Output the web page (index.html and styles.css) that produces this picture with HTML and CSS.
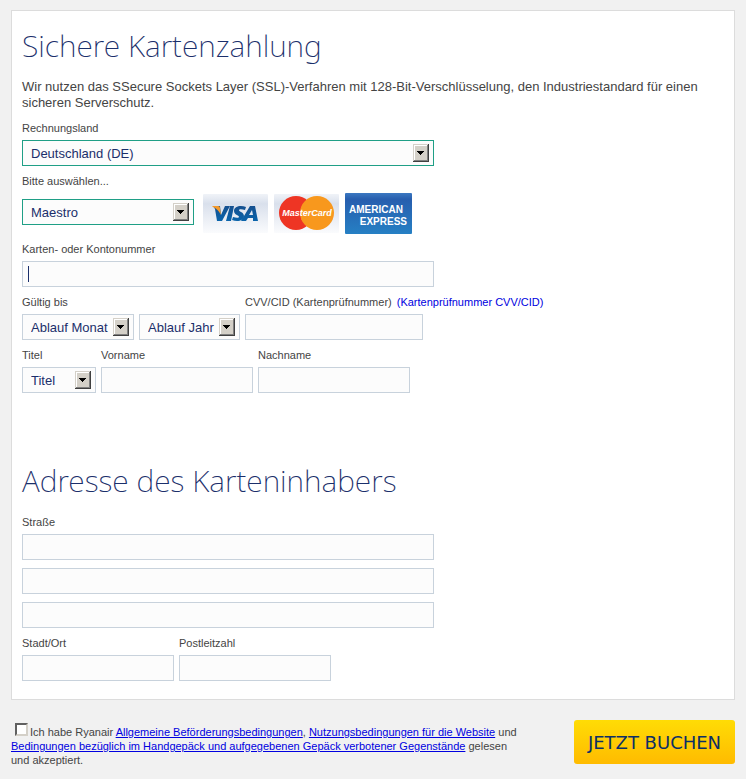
FILE: index.html
```html
<!DOCTYPE html>
<html lang="de">
<head>
    <meta charset="UTF-8">
    <meta name="viewport" content="width=device-width, initial-scale=1.0">
    <title>Sichere Kartenzahlung</title>
    <link rel="stylesheet" href="styles.css">
</head>

<body>
    <form id="paymentForm">
        <main class="card">
            <section class="payment">
                <h2>Sichere Kartenzahlung</h2>
                <p class="intro">Wir nutzen das SSecure Sockets Layer (SSL)-Verfahren mit 128-Bit-Verschlüsselung, den Industriestandard für einen sicheren Serverschutz.</p>

                <div class="field">
                    <label for="country">Rechnungsland</label>
                    <select id="country" class="wide selected">
                        <option>Deutschland (DE)</option>
                    </select>
                </div>

                <div class="field">
                    <label for="cardType">Bitte auswählen...</label>
                    <div class="card-types">
                        <select id="cardType" class="card-type selected">
                            <option>Maestro</option>
                        </select>
                        <div class="logos">
                            <!-- Visa -->
                            <svg width="65" height="41" viewBox="0 0 65 41" role="img" aria-label="Visa">
                                <defs>
                                    <linearGradient id="paper" x1="0" y1="0" x2="0" y2="1">
                                        <stop offset="0" stop-color="#f0f3f8"/>
                                        <stop offset="0.25" stop-color="#d9e0ec"/>
                                        <stop offset="0.6" stop-color="#e9edf4"/>
                                        <stop offset="1" stop-color="#fafbfd"/>
                                    </linearGradient>
                                    <linearGradient id="visaBlue" x1="0" y1="0" x2="0" y2="1">
                                        <stop offset="0" stop-color="#15508f"/>
                                        <stop offset="1" stop-color="#0a64ab"/>
                                    </linearGradient>
                                </defs>
                                <rect y="1" width="65" height="39" rx="1" fill="url(#paper)"/>
                                <g fill="url(#visaBlue)">
                                    <path d="M10 13h7l1 9 4-9h5l-8 15h-5L12 16z"/>
                                    <path d="M27 13h4l-3 15h-5z"/>
                                    <path d="M43 14l-1 3c-3-1-6-1-6 0 0 2 5 2 5 6 0 5-7 6-12 4l1-3c3 1 6 1 6 0 0-2-5-2-5-6 0-5 7-6 12-4z"/>
                                    <path fill-rule="evenodd" d="M47 13h5l3 15h-5v-3h-5l-2 3h-5zm2 4-3 5h4z"/>
                                </g>
                                <path d="M9 13h6q2 0 2 2l1 7q-3-6-8-8z" fill="#f49a2c"/>
                            </svg>
                            <!-- MasterCard -->
                            <svg width="65" height="41" viewBox="0 0 65 41" role="img" aria-label="MasterCard">
                                <rect y="1" width="65" height="39" rx="1" fill="url(#paper)"/>
                                <circle cx="22" cy="20" r="17" fill="#ee3524"/>
                                <circle cx="43" cy="20" r="17" fill="#f8981d"/>
                                <path d="M30 13h5M28 16h8M27 26h9M30 30h5" stroke="#f8981d" stroke-width="1"/>
                                <text x="33" y="23" text-anchor="middle" class="mc-text">MasterCard</text>
                            </svg>
                            <!-- American Express -->
                            <svg width="67" height="41" viewBox="0 0 67 41" role="img" aria-label="American Express">
                                <defs>
                                    <linearGradient id="amexBlue" x1="0" y1="0" x2="0" y2="1">
                                        <stop offset="0" stop-color="#3b78c1"/>
                                        <stop offset="0.15" stop-color="#275eae"/>
                                        <stop offset="1" stop-color="#2680c4"/>
                                    </linearGradient>
                                </defs>
                                <rect width="67" height="41" rx="1" fill="url(#amexBlue)"/>
                                <text x="4" y="20" class="amex-text">AMERICAN</text>
                                <text x="62" y="32" text-anchor="end" class="amex-text">EXPRESS</text>
                            </svg>
                        </div>
                    </div>
                </div>

                <div class="field">
                    <label for="cardNumber">Karten- oder Kontonummer</label>
                    <input type="text" id="cardNumber" class="wide" autofocus>
                </div>

                <div class="row">
                    <div class="field">
                        <label for="expMonth">Gültig bis</label>
                        <div class="expiry">
                            <select id="expMonth" class="month">
                                <option>Ablauf Monat</option>
                            </select>
                            <select id="expYear" class="year" aria-label="Ablauf Jahr">
                                <option>Ablauf Jahr</option>
                            </select>
                        </div>
                    </div>
                    <div class="field">
                        <div class="label-line">
                            <label for="cvv">CVV/CID (Kartenprüfnummer)</label>
                            <a href="#cvv">(Kartenprüfnummer CVV/CID)</a>
                        </div>
                        <input type="text" id="cvv" class="cvv">
                    </div>
                </div>

                <div class="row">
                    <div class="field">
                        <label for="title">Titel</label>
                        <select id="title" class="title">
                            <option>Titel</option>
                        </select>
                    </div>
                    <div class="field">
                        <label for="firstName">Vorname</label>
                        <input type="text" id="firstName" class="half">
                    </div>
                    <div class="field">
                        <label for="lastName">Nachname</label>
                        <input type="text" id="lastName" class="half">
                    </div>
                </div>
            </section>

            <section class="address">
                <h2>Adresse des Karteninhabers</h2>
                <div class="field">
                    <label for="street">Straße</label>
                    <div class="street-lines">
                        <input type="text" id="street" class="wide">
                        <input type="text" class="wide" aria-label="Straße, Zeile 2">
                        <input type="text" class="wide" aria-label="Straße, Zeile 3">
                    </div>
                </div>
                <div class="row">
                    <div class="field">
                        <label for="city">Stadt/Ort</label>
                        <input type="text" id="city" class="half">
                    </div>
                    <div class="field">
                        <label for="zip">Postleitzahl</label>
                        <input type="text" id="zip" class="half">
                    </div>
                </div>
            </section>
        </main>

        <footer>
            <p class="terms">
                <input type="checkbox" id="accept"><label for="accept">Ich habe Ryanair <a href="#agb">Allgemeine Beförderungsbedingungen</a>, <a href="#nutzung">Nutzungsbedingungen für die Website</a> und <a href="#gepaeck">Bedingungen bezüglich im Handgepäck und aufgegebenen Gepäck verbotener Gegenstände</a> gelesen und akzeptiert.</label>
            </p>
            <button type="submit">JETZT BUCHEN</button>
        </footer>
    </form>
</body>

</html>
```
FILE: styles.css
```css
* {
    box-sizing: border-box;
}

body {
    font-family: "Liberation Sans", Arial, sans-serif;
    font-size: 13px;
    line-height: 16px;
    margin: 0;
    padding: 10px 11px;
    background-color: #f1f1f1;
    color: #444;
}

.card {
    background-color: white;
    border: 1px solid #dcdcdc;
    padding: 15px 10px 11px;
}

h2 {
    margin: 0 0 13px;
    font-family: "Noto Sans", "Open Sans", sans-serif;
    font-size: 30px;
    font-weight: 200;
    line-height: 40px;
    color: #1b2f6b;
}

.intro {
    margin: 0 0 9px;
}

.payment,
.address {
    display: flex;
    flex-direction: column;
}

.address {
    margin-top: 61px;
}

.field {
    display: flex;
    flex-direction: column;
    align-items: flex-start;
    gap: 4px;
    margin-bottom: 7px;
    font-size: 11px;
}

.row,
.expiry {
    display: flex;
    gap: 5px;
}

.label-line {
    display: flex;
    gap: 5px;
}

.field a {
    color: #0000e0;
    text-decoration: none;
}

input[type="text"],
select {
    height: 26px;
    max-width: 100%;
    margin: 0;
    padding: 0 8px;
    border: 1px solid #c8d2dc;
    border-radius: 0;
    background-color: #fcfcfc;
    font-family: inherit;
    font-size: 13px;
    color: #1b2f6b;
    outline: none;
}

/* grauer Pfeil-Button rechts im Select */
select {
    appearance: none;
    padding-right: 20px;
    background-image: url("data:image/svg+xml,%3Csvg xmlns='http://www.w3.org/2000/svg' width='16' height='18'%3E%3Cpath fill='%23404040' d='M0 0h16v18H0z'/%3E%3Cpath fill='%23d4d0c8' d='M0 0h15v17H0z'/%3E%3Cpath fill='%23808080' d='M1 1h14v16H1z'/%3E%3Cpath fill='%23fff' d='M1 1h13v15H1z'/%3E%3Cpath fill='%23d4d0c8' d='M2 2h12v14H2z'/%3E%3Cpath d='M4 7h7v1H4zM5 8h5v1H5zM6 9h3v1H6zM7 10h1v1H7z'/%3E%3C/svg%3E");
    background-repeat: no-repeat;
    background-position: right 4px center;
}

/* Textcursor ohne Blinken */
input[type="text"]:focus {
    caret-color: transparent;
    background-image: linear-gradient(#1b2f6b, #1b2f6b);
    background-repeat: no-repeat;
    background-size: 1px 16px;
    background-position: 5px center;
}

.wide {
    width: 412px;
}

select.selected {
    border-color: #1f9f86;
}

select.card-type {
    width: 172px;
    margin-top: 6px;
}

.month {
    width: 112px;
}

.year {
    width: 101px;
}

.cvv {
    width: 178px;
}

.title {
    width: 74px;
}

.half {
    width: 152px;
}

.card-types {
    display: flex;
    align-items: flex-start;
    gap: 9px;
}

.logos {
    display: flex;
    gap: 6px;
}

.mc-text {
    font: italic bold 9px "Liberation Sans", Arial, sans-serif;
    fill: white;
}

.amex-text {
    font: bold 10px "Liberation Sans", Arial, sans-serif;
    fill: white;
}

.street-lines {
    display: flex;
    flex-direction: column;
    gap: 8px;
    max-width: 100%;
}

footer {
    display: flex;
    justify-content: space-between;
    align-items: flex-start;
    margin-top: 20px;
}

.terms {
    flex: 0 1 510px;
    margin: 3px 0 0;
    font-size: 11px;
    line-height: 14px;
}

.terms a {
    color: #0000e0;
}

input[type="checkbox"] {
    appearance: none;
    width: 13px;
    height: 13px;
    margin: 0 2px 0 4px;
    vertical-align: 0;
    border: 2px solid;
    border-color: #606060 #d4d0c8 #d4d0c8 #606060;
    background-color: white;
}

button {
    width: 161px;
    height: 44px;
    padding: 0;
    border: none;
    border-radius: 3px;
    background: linear-gradient(#ffdc05, #ffbb00);
    font-family: "DejaVu Sans", Verdana, sans-serif;
    font-size: 18px;
    color: #0c2f66;
    cursor: pointer;
}
```
